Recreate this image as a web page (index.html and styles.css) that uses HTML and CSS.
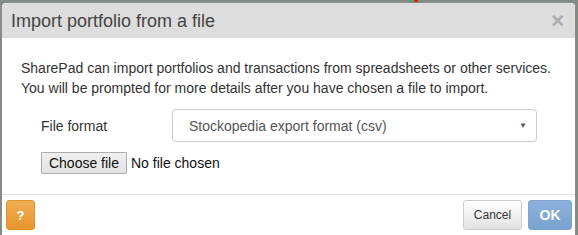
FILE: index.html
```html
<!DOCTYPE html>
<html>
<head>
<meta charset="utf-8">
<link rel="stylesheet" href="styles.css">
</head>
<body>
<div class="backdrop-strip"><span class="leak leak-g"></span><span class="leak leak-r"></span></div>
<div class="modal">
  <div class="modal-header">
    <h4 class="modal-title">Import portfolio from a file</h4>
    <span class="close">&times;</span>
  </div>
  <div class="modal-body">
    <p class="intro">SharePad can import portfolios and transactions from spreadsheets or other services.<br>You will be prompted for more details after you have chosen a file to import.</p>
    <div class="form-row">
      <label class="label">File format</label>
      <div class="select"><span class="select-text">Stockopedia export format (csv)</span><span class="caret">&#9660;</span></div>
    </div>
    <div class="file-row">
      <span class="file-btn">Choose file</span><span class="file-none">No file chosen</span>
    </div>
  </div>
  <div class="modal-footer">
    <span class="btn btn-help">?</span>
    <div class="spacer"></div>
    <span class="btn btn-cancel">Cancel</span>
    <span class="btn btn-ok">OK</span>
  </div>
</div>
</body>
</html>
```

FILE: styles.css
```css
html, body {
  margin: 0;
  padding: 0;
  width: 578px;
  height: 235px;
  overflow: hidden;
  background: #848a86;
  font-family: "Liberation Sans", Arial, sans-serif;
}

.backdrop-strip {
  height: 2px;
  position: relative;
}

.leak {
  position: absolute;
  top: 0;
  height: 2px;
  width: 3px;
}
.leak-g { left: 410px; background: #3cb44a; }
.leak-r { left: 414px; background: #e0201c; width: 4px; }

.modal {
  margin-left: 1px;
  width: 575px;
  box-sizing: border-box;
  border: 1px solid #8c8c8c;
  border-bottom: none;
  border-radius: 5px 5px 0 0;
  background: #fff;
  height: 240px;
  display: flex;
  flex-direction: column;
}

.modal-header {
  background: #dddddd;
  height: 35px;
  box-sizing: border-box;
  padding: 0 9px;
  display: flex;
  align-items: center;
  border-radius: 4px 4px 0 0;
}

.modal-title {
  margin: 0;
  flex: 1;
  font-size: 18px;
  font-weight: normal;
  color: #444;
  line-height: 20px;
  padding-top: 1px;
}

.close {
  font-size: 22px;
  font-weight: bold;
  color: #ababab;
  line-height: 20px;
  margin-right: 2px;
}

.modal-body {
  padding: 20px 20px 0 19px;
  height: 156px;
  box-sizing: border-box;
}

.intro {
  margin: 0;
  font-size: 14px;
  line-height: 20px;
  color: #333;
}

.form-row {
  display: flex;
  align-items: center;
  margin-top: 11px;
  padding-left: 20px;
}

.label {
  width: 131px;
  font-size: 14px;
  color: #333;
}

.select {
  width: 365px;
  height: 33px;
  box-sizing: border-box;
  border: 1px solid #cccccc;
  border-radius: 4px;
  display: flex;
  align-items: center;
  padding: 0 9px 0 16px;
  font-size: 14px;
  color: #555;
}

.select-text { flex: 1; }

.caret {
  font-size: 8px;
  color: #555;
}

.file-row {
  display: flex;
  align-items: center;
  margin-top: 10px;
  padding-left: 20px;
}

.file-btn {
  width: 86px;
  height: 22px;
  box-sizing: border-box;
  border: 1px solid #adadad;
  background: linear-gradient(#f0f0f0, #e3e3e3);
  font-size: 14px;
  color: #111;
  display: flex;
  align-items: center;
  justify-content: center;
  border-radius: 1px;
}

.file-none {
  margin-left: 4px;
  font-size: 14px;
  color: #111;
}

.modal-footer {
  border-top: 1px solid #e5e5e5;
  padding: 5px 3px 0 4px;
  display: flex;
  align-items: flex-start;
  gap: 6px;
}

.spacer { flex: 1; }

.btn {
  height: 30px;
  box-sizing: border-box;
  border-radius: 3px;
  display: flex;
  align-items: center;
  justify-content: center;
  font-size: 12px;
}

.btn-help {
  width: 29px;
  background: linear-gradient(#f0ae55, #e8952d);
  border: 1px solid #e0922a;
  color: #fff;
  font-weight: bold;
  font-size: 13px;
}

.btn-cancel {
  width: 59px;
  background: linear-gradient(#ffffff, #e2e2e2);
  border: 1px solid #cccccc;
  color: #333;
}

.btn-ok {
  width: 44px;
  background: linear-gradient(#8cb0da, #7aa2d1);
  border: 1px solid #7ea4cf;
  color: #fff;
  font-weight: bold;
  font-size: 14px;
}
```
